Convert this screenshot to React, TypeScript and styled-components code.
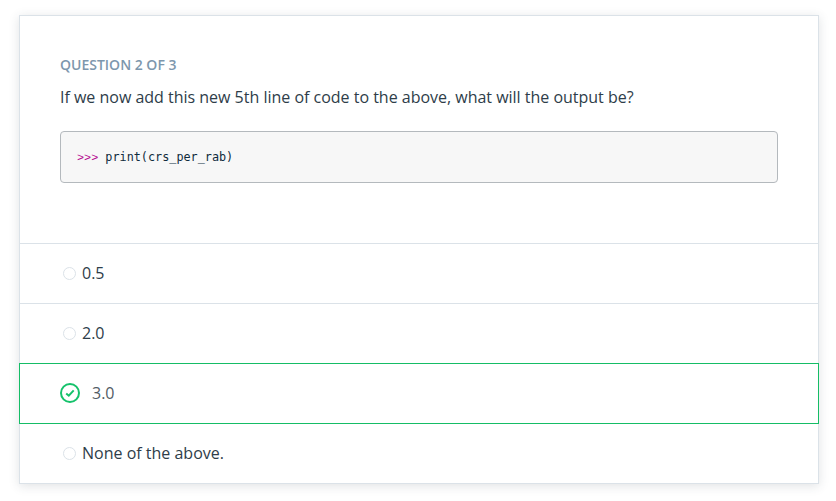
import React from "react";
import styled, { createGlobalStyle } from "styled-components";

const GlobalStyle = createGlobalStyle`
  * { box-sizing: border-box; }
  body { margin: 0; background: #fff; font-family: "Open Sans", sans-serif; }
`;

const Page = styled.main`
  height: 501px;
  padding: 15px 17px 17px 19px;
  overflow: hidden;
`;

const Card = styled.section`
  width: 800px;
  height: 469px;
  border: 1px solid #dbe2e8;
  background: #fff;
  box-shadow: 0 2px 10px rgba(46, 60, 73, 0.15);
`;

const Prompt = styled.header`
  height: 227px;
  padding: 39px 40px 0;
`;

const Counter = styled.h3`
  margin: 0;
  font-size: 14px;
  line-height: 20px;
  font-weight: 600;
  color: #7d97ad;
  text-transform: uppercase;
`;

const Question = styled.p`
  margin: 9px 0 0;
  font-size: 16px;
  line-height: 26px;
  color: #2e3d49;
  letter-spacing: -0.01px;
`;

const CodeBlock = styled.pre`
  margin: 21px 0 0;
  height: 52px;
  padding: 0 16px;
  border: 1px solid #b4b9bd;
  border-radius: 4px;
  background: #f7f7f7;
  color: #0f2b3d;
  font-family: "DejaVu Sans Mono", monospace;
  font-size: 11.8px;
  line-height: 50px;
`;

const Chevrons = styled.span`
  color: #b3008c;
  font-family: "Liberation Mono", monospace;
`;

const Options = styled.ul`
  margin: 0;
  padding: 0;
  list-style: none;
`;

const Option = styled.li<{ $correct?: boolean }>`
  display: flex;
  align-items: center;
  height: ${(p) => (p.$correct ? 61 : 60)}px;
  margin: ${(p) => (p.$correct ? "0 -1px -1px" : "0")};
  padding-bottom: ${(p) => (p.$correct ? 2 : 0)}px;
  padding-left: ${(p) => (p.$correct ? 40 : 43)}px;
  gap: ${(p) => (p.$correct ? 12 : 6)}px;
  border: ${(p) => (p.$correct ? "1px solid #15bd66" : "0 solid #dbe2e8")};
  border-top-width: 1px;
  font-size: 16px;
  color: ${(p) => (p.$correct ? "#525c65" : "#2e3d49")};

  &:last-child {
    border-top-color: transparent;
  }
`;

const Label = styled.span<{ $correct?: boolean }>`
  padding-bottom: ${(p) => (p.$correct ? 0 : 2)}px;
  line-height: 24px;
`;

const Radio = styled.span`
  width: 13px;
  height: 13px;
  border: 1px solid #dbe2e8;
  border-radius: 50%;
`;

const CheckMark = () => (
  <svg width="20" height="20" viewBox="0 0 20 20" fill="none" stroke="#15c26b" strokeWidth="2">
    <circle cx="10" cy="10" r="9" />
    <path d="M6.2 10.4 8.8 12.7 13.7 7.4" />
  </svg>
);

const options = [
  { label: "0.5" },
  { label: "2.0" },
  { label: "3.0", correct: true },
  { label: "None of the above." },
];

export default function App() {
  return (
    <Page>
      <GlobalStyle />
      <Card>
        <Prompt>
          <Counter>Question 2 of 3</Counter>
          <Question>If we now add this new 5th line of code to the above, what will the output be?</Question>
          <CodeBlock>
            <Chevrons>&gt;&gt;&gt;</Chevrons> print(crs_per_rab)
          </CodeBlock>
        </Prompt>
        <Options>
          {options.map((o) => (
            <Option key={o.label} $correct={o.correct}>
              {o.correct ? <CheckMark /> : <Radio />}
              <Label $correct={o.correct}>{o.label}</Label>
            </Option>
          ))}
        </Options>
      </Card>
    </Page>
  );
}
